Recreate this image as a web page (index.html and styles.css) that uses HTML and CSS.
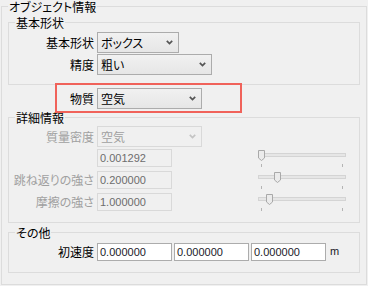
FILE: index.html
```html
<!DOCTYPE html>
<html lang="ja">
<head>
<meta charset="utf-8" />
<meta name="viewport" content="width=device-width, initial-scale=1" />
<title>オブジェクト情報</title>
<link rel="stylesheet" href="styles.css">
</head>
<body>
  <fieldset class="group group-outer">
    <legend>オブジェクト情報</legend>

    <fieldset class="group group-shape">
      <legend>基本形状</legend>
      <div class="row">
        <span class="label">基本形状</span>
        <div class="combo combo-shape">
          <span class="combo-text">ボックス</span>
          <svg class="chev" width="7" height="5" viewBox="0 0 7 5"><path d="M0.8 0.8 L3.5 3.6 L6.2 0.8" /></svg>
        </div>
      </div>
      <div class="row row-next">
        <span class="label">精度</span>
        <div class="combo combo-precision">
          <span class="combo-text">粗い</span>
          <svg class="chev" width="7" height="5" viewBox="0 0 7 5"><path d="M0.8 0.8 L3.5 3.6 L6.2 0.8" /></svg>
        </div>
      </div>
    </fieldset>

    <!-- highlighted row (red frame is an annotation over it) -->
    <div class="row row-material">
      <span class="label">物質</span>
      <div class="combo combo-material">
        <span class="combo-text">空気</span>
        <svg class="chev" width="7" height="5" viewBox="0 0 7 5"><path d="M0.8 0.8 L3.5 3.6 L6.2 0.8" /></svg>
      </div>
    </div>

    <fieldset class="group group-detail">
      <legend>詳細情報</legend>
      <div class="row row-density">
        <span class="label is-disabled">質量密度</span>
        <div class="combo combo-material is-disabled">
          <span class="combo-text">空気</span>
          <svg class="chev" width="7" height="5" viewBox="0 0 7 5"><path d="M0.8 0.8 L3.5 3.6 L6.2 0.8" /></svg>
        </div>
      </div>
      <div class="row row-field">
        <span class="label is-disabled"></span>
        <span class="field is-disabled">0.001292</span>
        <svg class="slider" width="92" height="19" viewBox="0 0 92 19">
          <rect class="track" x="2.5" y="4.5" width="87" height="3" />
          <polygon class="thumb" points="2.5,1.5 8.5,1.5 8.5,9 5.5,11.5 2.5,9" />
          <line class="tick" x1="5.5" y1="15" x2="5.5" y2="18" />
          <line class="tick" x1="86.5" y1="15" x2="86.5" y2="18" />
        </svg>
      </div>
      <div class="row row-field">
        <span class="label is-disabled">跳ね返りの強さ</span>
        <span class="field is-disabled">0.200000</span>
        <svg class="slider" width="92" height="19" viewBox="0 0 92 19">
          <rect class="track" x="2.5" y="4.5" width="87" height="3" />
          <polygon class="thumb" points="18.5,1.5 24.5,1.5 24.5,9 21.5,11.5 18.5,9" />
          <line class="tick" x1="5.5" y1="15" x2="5.5" y2="18" />
          <line class="tick" x1="86.5" y1="15" x2="86.5" y2="18" />
        </svg>
      </div>
      <div class="row row-field">
        <span class="label is-disabled">摩擦の強さ</span>
        <span class="field is-disabled">1.000000</span>
        <svg class="slider" width="92" height="19" viewBox="0 0 92 19">
          <rect class="track" x="2.5" y="4.5" width="87" height="3" />
          <polygon class="thumb" points="10.5,1.5 16.5,1.5 16.5,9 13.5,11.5 10.5,9" />
          <line class="tick" x1="5.5" y1="15" x2="5.5" y2="18" />
          <line class="tick" x1="86.5" y1="15" x2="86.5" y2="18" />
        </svg>
      </div>
    </fieldset>

    <fieldset class="group group-other">
      <legend>その他</legend>
      <div class="row row-field">
        <span class="label">初速度</span>
        <span class="field">0.000000</span>
        <span class="field">0.000000</span>
        <span class="field">0.000000</span>
        <span class="unit">m</span>
      </div>
    </fieldset>
  </fieldset>
</body>
</html>
```

FILE: styles.css
```css
body {
  margin: 0;
  background: #f0f0f0;
  color: #000;
  font-family: "Noto Sans CJK JP", sans-serif;
  font-size: 12px;
  font-feature-settings: "palt";
}
.group {
  margin: 0;
  min-width: 0;
  border: 1px solid #dcdcdc;
  padding: 3px 6px 9px;
}
.group legend {
  padding: 0 1px;
  font-size: 12px;
  line-height: 13px;
}
.group-outer {
  margin-left: 1px;
  width: 366px;
  box-sizing: border-box;
  padding: 3px 6px 11px;
}
.group-detail {
  padding: 2px 6px 11px;
}
.group-other {
  margin-top: 3px;
  padding: 4px 6px 11px;
}
.row {
  display: flex;
  align-items: center;
  height: 21px;
}
.row-next {
  margin-top: 1px;
}
.row-material {
  position: relative;
  padding: 3px 0 2px 7px;
}
.row-material::after {
  content: "";
  position: absolute;
  left: 47px;
  top: -2px;
  width: 187px;
  height: 30px;
  box-sizing: border-box;
  border: 2px solid #f0625a;
}
.label {
  width: 79px;
  margin-right: 3px;
  display: flex;
  justify-content: flex-end;
  white-space: nowrap;
  line-height: 14px;
}
.is-disabled {
  color: #a0a0a0;
}
.combo {
  height: 21px;
  box-sizing: border-box;
  display: flex;
  align-items: center;
  padding: 0 5px 0 3px;
  border: 1px solid #acacac;
  background: linear-gradient(#f1f1f1, #e6e6e6);
}
.combo-shape { width: 82px; }
.combo-precision { width: 115px; }
.combo-material { width: 105px; }
.combo-text {
  flex: 1;
  line-height: 14px;
}
.chev path {
  fill: none;
  stroke: #555;
  stroke-width: 1.7;
}
.combo.is-disabled {
  border-color: #d9d9d9;
  background: #f0f0f0;
}
.combo.is-disabled .chev path {
  stroke: #c4c4c4;
}
.row-field {
  height: 18px;
  margin-top: 4px;
}
.row-density + .row-field {
  margin-top: 2px;
}
.group-other .row-field {
  margin-top: 0;
}
.field {
  width: 75px;
  height: 18px;
  box-sizing: border-box;
  margin-right: 2px;
  padding: 0 2px;
  border: 1px solid #acacac;
  background: #fff;
  font-family: "Liberation Sans", Arial, sans-serif;
  font-size: 11px;
  line-height: 16px;
  color: #1a1a28;
}
.field.is-disabled {
  border-color: #d9d9d9;
  background: #f0f0f0;
  color: #6d6d6d;
}
.unit {
  margin-left: 2px;
  margin-top: -3px;
  font-family: "Liberation Sans", Arial, sans-serif;
  font-size: 11px;
  color: #1a1a28;
}
.slider {
  margin-left: auto;
  margin-right: 5px;
  align-self: flex-start;
}
.track {
  fill: #e6e6e6;
  stroke: #d4d4d4;
}
.thumb {
  fill: #ebebeb;
  stroke: #a9a9a9;
}
.tick {
  stroke: #b4b4b4;
}
```
